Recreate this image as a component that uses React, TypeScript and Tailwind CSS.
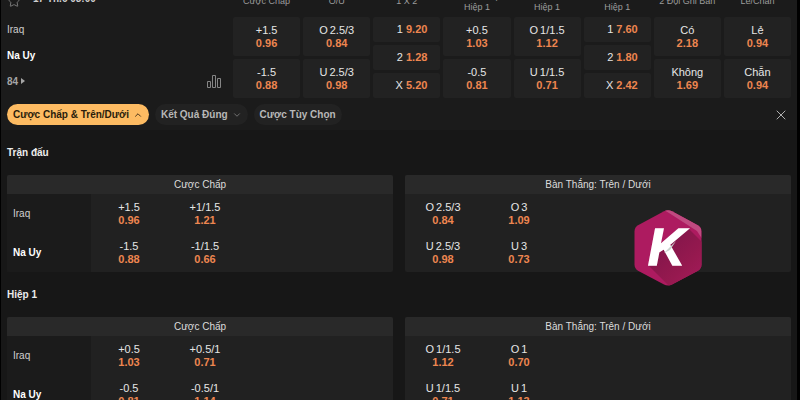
import React, { useState } from 'react';
import { ChevronDown, ChevronUp, Star, X } from 'lucide-react';

interface Odd {
  label: string;
  line?: string;
  price: string;
}

interface Market {
  title: string[];
  odds: Odd[];
}

interface BoardTable {
  title: string;
  teams?: string[];
  rows: Odd[][];
}

interface Period {
  name: string;
  tables: BoardTable[];
}

const markets: Market[] = [
  {
    title: ['Cược Chấp'],
    odds: [
      { label: '+1.5', price: '0.96' },
      { label: '-1.5', price: '0.88' },
    ],
  },
  {
    title: ['O/U'],
    odds: [
      { label: 'O', line: '2.5/3', price: '0.84' },
      { label: 'U', line: '2.5/3', price: '0.98' },
    ],
  },
  {
    title: ['1 X 2'],
    odds: [
      { label: '1', price: '9.20' },
      { label: '2', price: '1.28' },
      { label: 'X', price: '5.20' },
    ],
  },
  {
    title: ['Cược Chấp', 'Hiệp 1'],
    odds: [
      { label: '+0.5', price: '1.03' },
      { label: '-0.5', price: '0.81' },
    ],
  },
  {
    title: ['O/U', 'Hiệp 1'],
    odds: [
      { label: 'O', line: '1/1.5', price: '1.12' },
      { label: 'U', line: '1/1.5', price: '0.71' },
    ],
  },
  {
    title: ['1 X 2', 'Hiệp 1'],
    odds: [
      { label: '1', price: '7.60' },
      { label: '2', price: '1.80' },
      { label: 'X', price: '2.42' },
    ],
  },
  {
    title: ['2 Đội Ghi Bàn'],
    odds: [
      { label: 'Có', price: '2.18' },
      { label: 'Không', price: '1.69' },
    ],
  },
  {
    title: ['Lẻ/Chẵn'],
    odds: [
      { label: 'Lẻ', price: '0.94' },
      { label: 'Chẵn', price: '0.94' },
    ],
  },
];

const periods: Period[] = [
  {
    name: 'Trận đấu',
    tables: [
      {
        title: 'Cược Chấp',
        teams: ['Iraq', 'Na Uy'],
        rows: [
          [{ label: '+1.5', price: '0.96' }, { label: '+1/1.5', price: '1.21' }],
          [{ label: '-1.5', price: '0.88' }, { label: '-1/1.5', price: '0.66' }],
        ],
      },
      {
        title: 'Bàn Thắng: Trên / Dưới',
        rows: [
          [{ label: 'O', line: '2.5/3', price: '0.84' }, { label: 'O', line: '3', price: '1.09' }],
          [{ label: 'U', line: '2.5/3', price: '0.98' }, { label: 'U', line: '3', price: '0.73' }],
        ],
      },
    ],
  },
  {
    name: 'Hiệp 1',
    tables: [
      {
        title: 'Cược Chấp',
        teams: ['Iraq', 'Na Uy'],
        rows: [
          [{ label: '+0.5', price: '1.03' }, { label: '+0.5/1', price: '0.71' }],
          [{ label: '-0.5', price: '0.81' }, { label: '-0.5/1', price: '1.14' }],
        ],
      },
      {
        title: 'Bàn Thắng: Trên / Dưới',
        rows: [
          [{ label: 'O', line: '1/1.5', price: '1.12' }, { label: 'O', line: '1', price: '0.70' }],
          [{ label: 'U', line: '1/1.5', price: '0.71' }, { label: 'U', line: '1', price: '1.13' }],
        ],
      },
    ],
  },
];

function OddText({ odd, inline }: { odd: Odd; inline?: boolean }) {
  return (
    <span className={inline ? 'flex items-center gap-[3px]' : 'flex flex-col items-center'}>
      <span className="flex gap-0.5 text-[#e6e6e6]">
        <span>{odd.label}</span>
        {odd.line && <span>{odd.line}</span>}
      </span>
      <span className="font-bold text-[#ee8650]">{odd.price}</span>
    </span>
  );
}

function MarketColumn({ market }: { market: Market }) {
  const inline = market.odds.length === 3;
  return (
    <div className="flex flex-col">
      <div className="flex h-8 flex-col items-center justify-center pt-px text-[9px] leading-[11px] whitespace-nowrap text-[#9b9b9b]">
        {market.title.map((line) => (
          <span key={line}>{line}</span>
        ))}
      </div>
      <div className="flex h-[81px] flex-col gap-[3px]">
        {market.odds.map((odd) => (
          <button
            key={odd.label}
            className={`flex flex-1 items-center rounded-xs bg-[#222222] text-[11px] leading-[13px] hover:bg-[#2c2c2c] ${
              inline ? 'justify-end pr-[13px]' : 'justify-center'
            }`}
          >
            <OddText odd={odd} inline={inline} />
          </button>
        ))}
      </div>
    </div>
  );
}

function OddsTable({ table }: { table: BoardTable }) {
  return (
    <table className="w-full table-fixed border-collapse overflow-hidden rounded-xs bg-[#212121]">
      <colgroup>
        {table.teams && <col className="w-[84px]" />}
        <col className="w-[76px]" />
        <col className="w-[76px]" />
        <col />
      </colgroup>
      <thead>
        <tr className="h-[19px] bg-[#292929]">
          <th colSpan={table.teams ? 4 : 3} className="p-0 text-center text-[10px] leading-[19px] font-normal text-[#dcdcdc]">
            {table.title}
          </th>
        </tr>
      </thead>
      <tbody>
        {table.rows.map((row, i) => (
          <tr key={i} className="h-[39px]">
            {table.teams && (
              <th
                scope="row"
                className={`bg-[#1b1b1b] p-0 pl-1.5 text-left text-[10px] ${
                  i === 1 ? 'font-bold text-white' : 'font-normal text-[#d0d0d0]'
                }`}
              >
                {table.teams[i]}
              </th>
            )}
            {row.map((odd) => (
              <td key={odd.label + odd.line} className="p-0">
                <button className="block w-full text-[11px] leading-[13px]">
                  <OddText odd={odd} />
                </button>
              </td>
            ))}
            <td className="p-0" />
          </tr>
        ))}
      </tbody>
    </table>
  );
}

function HexLogo() {
  return (
    <svg viewBox="0 0 70 76" className="absolute top-[210px] right-[97px] h-[76px] w-[70px]" role="img" aria-label="K">
      <defs>
        <clipPath id="hex">
          <path d="M31 1.2Q35 -0.8 39 1.2L65 15.2Q68.500 17.300 68.500 21.500V54.500Q68.500 58.500 65 60.700L39 74.600Q35 76.600 31 74.600L5 60.700Q1.500 58.500 1.500 54.500V21.500Q1.500 17.300 5 15.200Z" />
        </clipPath>
        <linearGradient id="shade" x1="0.1" y1="0.1" x2="0.9" y2="0.9">
          <stop offset="0" stopColor="#7d1549" />
          <stop offset="0.6" stopColor="#96194f" />
          <stop offset="1" stopColor="#a81b5d" />
        </linearGradient>
      </defs>
      <g clipPath="url(#hex)">
        <rect width="70" height="76" fill="#ad1b60" />
        <path d="M56 19L80 43V80H40L16 56L29 40Z" fill="url(#shade)" />
        <path d="M31 0H39L65 15.200Q68.500 17.300 68.500 21.500V28L64 21L36 3Z" fill="#bf4a80" />
      </g>
      <text
        x="15"
        y="55"
        fill="#ffffff"
        stroke="#ffffff"
        strokeWidth="1.500"
        fontFamily="Liberation Sans, sans-serif"
        fontWeight="bold"
        fontStyle="italic"
        fontSize="51"
      >
        K
      </text>
      <path d="M31 43L43 31L37 40Z" fill="#c9d3cf" />
    </svg>
  );
}

function App() {
  const [open, setOpen] = useState(true);

  return (
    <div className="relative h-screen overflow-hidden bg-black pr-[3px] pl-px font-['Liberation_Sans',Arial,sans-serif]">
      <div className="h-full overflow-hidden bg-[#171717]">
        {/* Match row, scrolled partly under the top edge */}
        <section className="-mt-[15px] flex bg-[#1b1b1b] px-[6px]">
          <div className="flex w-[226px] shrink-0 flex-col text-[10px] text-[#cfcfcf]">
            <div className="flex h-[31px] items-center gap-3">
              <button aria-label="Yêu thích">
                <Star className="size-3.5 text-[#858585]" strokeWidth={1.5} />
              </button>
              <span className="pb-1 font-bold">17 Th.6 03:00</span>
            </div>
            <div className="flex h-[26px] items-center">Iraq</div>
            <div className="flex h-[26px] items-center font-bold text-white">Na Uy</div>
            <div className="flex h-[26px] items-center justify-between pr-3">
              <a href="#more" className="flex items-center gap-[3px] font-bold text-[#a5a5a5]">
                84
                <svg viewBox="0 0 4 6" className="h-1.5 w-1 fill-current">
                  <path d="M0 0L4 3L0 6Z" />
                </svg>
              </a>
              <button aria-label="Thống kê">
                <svg viewBox="0 0 14 14" className="size-3.5" fill="none" stroke="#858585">
                  <path d="M0.500 7.500H3.500V13.500H0.500ZM5.500 1.500H8.500V13.500H5.500ZM10.500 4.500H13.500V13.500H10.500Z" />
                </svg>
              </button>
            </div>
          </div>
          <div className="grid flex-1 grid-cols-8 gap-[3px]">
            {markets.map((market, i) => (
              <MarketColumn key={i} market={market} />
            ))}
          </div>
        </section>

        {/* Bet type filters */}
        <nav className="flex items-center gap-1.5 bg-[#1b1b1b] pt-[6px] pr-2 pb-[5px] pl-[6px] text-[10px] font-bold text-[#b8b8b8]">
          <button
            onClick={() => setOpen(!open)}
            className="flex h-[21px] items-center gap-1 rounded-full bg-[#fdbb62] px-1.5 text-[#2a1d0c]"
          >
            Cược Chấp &amp; Trên/Dưới
            {open ? <ChevronUp className="size-2.5" strokeWidth={2} /> : <ChevronDown className="size-2.5" strokeWidth={2} />}
          </button>
          <button className="flex h-[21px] items-center gap-1 rounded-full bg-[#222222] px-1.5">
            Kết Quả Đúng
            <ChevronDown className="size-2.5 text-[#808080]" strokeWidth={2} />
          </button>
          <button className="flex h-[21px] items-center rounded-full bg-[#222222] px-1.5">Cược Tùy Chọn</button>
          <button aria-label="Đóng" className="ml-auto">
            <X className="size-4 text-[#b0b0b0]" strokeWidth={1.5} />
          </button>
        </nav>

        {open &&
          periods.map((period) => (
            <section key={period.name} className="px-[6px]">
              <h2 className="flex h-[45px] items-center text-[10px] font-bold text-[#ececec]">{period.name}</h2>
              <div className="grid grid-cols-2 gap-3">
                {period.tables.map((table) => (
                  <OddsTable key={table.title} table={table} />
                ))}
              </div>
            </section>
          ))}
      </div>
      <HexLogo />
    </div>
  );
}

export default App;
